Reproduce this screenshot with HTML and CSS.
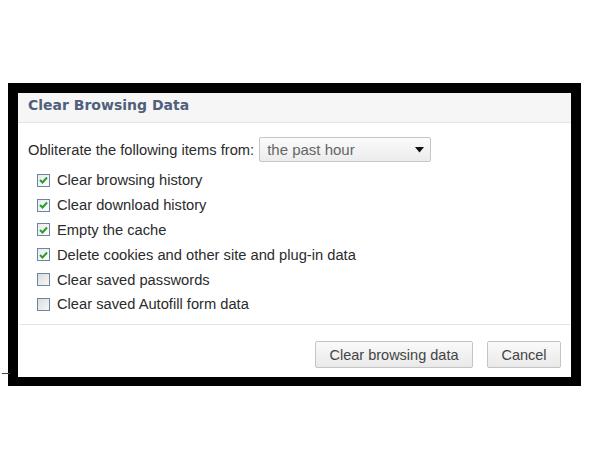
FILE: index.html
```html
<!DOCTYPE html>
<html>
<head>
<meta charset="utf-8">
<link rel="stylesheet" href="styles.css">
</head>
<body>
<div class="page">
  <div class="tick"></div>
  <div class="frame">
    <div class="dialog">
      <div class="title">Clear Browsing Data</div>
      <div class="content">
        <div class="from-row">
          <span class="label">Obliterate the following items from:</span>
          <div class="select">
            <span>the past hour</span>
            <svg class="arrow" width="9" height="6" viewBox="0 0 9 6"><path d="M0 0H9L4.5 5.5Z" fill="#111"/></svg>
          </div>
        </div>
        <div class="checks">
          <div class="check"><span class="box on"><svg width="9" height="8" viewBox="0 0 9 8"><path d="M1 4L3.5 6.5L8 1.5" fill="none" stroke="#23a02b" stroke-width="2"/></svg></span>Clear browsing history</div>
          <div class="check"><span class="box on"><svg width="9" height="8" viewBox="0 0 9 8"><path d="M1 4L3.5 6.5L8 1.5" fill="none" stroke="#23a02b" stroke-width="2"/></svg></span>Clear download history</div>
          <div class="check"><span class="box on"><svg width="9" height="8" viewBox="0 0 9 8"><path d="M1 4L3.5 6.5L8 1.5" fill="none" stroke="#23a02b" stroke-width="2"/></svg></span>Empty the cache</div>
          <div class="check"><span class="box on"><svg width="9" height="8" viewBox="0 0 9 8"><path d="M1 4L3.5 6.5L8 1.5" fill="none" stroke="#23a02b" stroke-width="2"/></svg></span>Delete cookies and other site and plug-in data</div>
          <div class="check"><span class="box"></span>Clear saved passwords</div>
          <div class="check"><span class="box"></span>Clear saved Autofill form data</div>
        </div>
      </div>
      <div class="footer">
        <button class="btn btn-clear">Clear browsing data</button>
        <button class="btn btn-cancel">Cancel</button>
      </div>
    </div>
  </div>
</div>
</body>
</html>
```
FILE: styles.css
```css
html, body {
  margin: 0;
  padding: 0;
  background: #fff;
}
.page {
  width: 600px;
  height: 450px;
  padding: 83px 0 0 8px;
  box-sizing: border-box;
  position: relative;
  font-family: "Liberation Sans", Arial, sans-serif;
  font-size: 14.7px;
  color: #2b2b2b;
}
.tick {
  position: absolute;
  left: 2px;
  top: 373px;
  width: 8px;
  height: 1px;
  background: #444;
}
.frame {
  width: 573px;
  height: 303px;
  box-sizing: border-box;
  border: 10px solid #000;
  border-bottom-width: 9px;
  background: #fff;
}
.dialog {
  display: flex;
  flex-direction: column;
  height: 100%;
}
.title {
  height: 29px;
  background: #f6f6f6;
  border-bottom: 1px solid #e3e3e3;
  padding-left: 10px;
  font-family: "DejaVu Sans", Verdana, sans-serif;
  font-weight: bold;
  font-size: 14px;
  line-height: 25px;
  color: #4f5f7c;
}
.content {
  padding: 14px 0 0 10px;
  flex: 1;
}
.from-row {
  display: flex;
  align-items: center;
  height: 25px;
}
.label {
  margin-right: 5px;
}
.select {
  width: 172px;
  height: 25px;
  box-sizing: border-box;
  border: 1px solid #c6c6c6;
  border-radius: 2px;
  background: linear-gradient(#fbfbfb, #ececec);
  display: flex;
  align-items: center;
  justify-content: space-between;
  padding: 0 6px 0 7px;
  color: #666;
  font-size: 15px;
}
.arrow {
  display: block;
}
.checks {
  padding: 6px 0 0 9px;
  display: flex;
  flex-direction: column;
}
.check {
  height: 24.8px;
  display: flex;
  align-items: center;
}
.box {
  width: 13px;
  height: 13px;
  box-sizing: border-box;
  border: 1px solid #6a86a4;
  background: linear-gradient(135deg, #dcdcdc, #f7f7f7);
  margin-right: 7px;
  display: flex;
  align-items: center;
  justify-content: center;
}
.box.on {
  background: linear-gradient(135deg, #eaeaea, #fdfdfd);
}
.footer {
  border-top: 1px solid #e4e4e4;
  margin: 0 1px 0 2px;
  display: flex;
  justify-content: flex-end;
  align-items: flex-start;
  padding: 16px 9px 9px 0;
  gap: 14px;
}
.btn {
  height: 27px;
  box-sizing: border-box;
  border: 1px solid #c4c4c4;
  border-radius: 2px;
  background: linear-gradient(#fafafa, #e9e9e9);
  font-family: "Liberation Sans", Arial, sans-serif;
  font-size: 14.5px;
  color: #444;
  padding: 0;
}
.btn-clear {
  width: 158px;
}
.btn-cancel {
  width: 74px;
}
```
